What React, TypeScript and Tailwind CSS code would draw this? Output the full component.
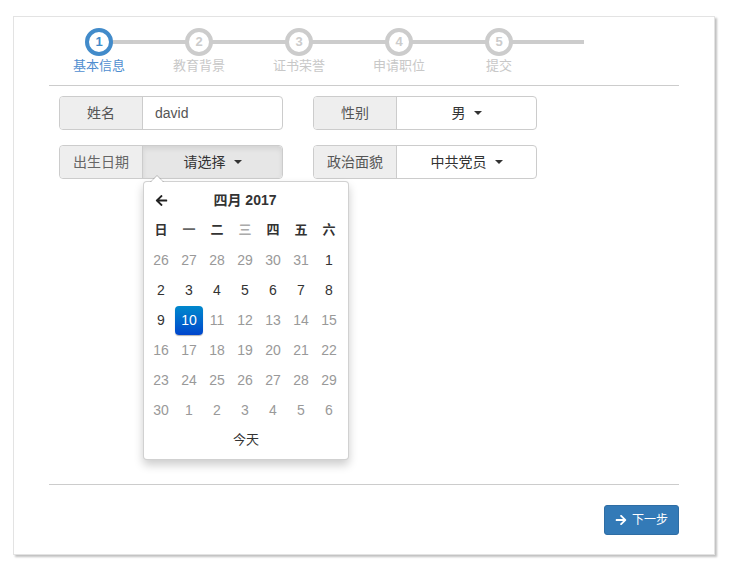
import React from "react";
import { FaArrowLeft, FaArrowRight } from "react-icons/fa";

const font = { fontFamily: '"Liberation Sans", Arial, "Noto Sans CJK SC", sans-serif' };

const steps = ["基本信息", "教育背景", "证书荣誉", "申请职位", "提交"];

function Caret() {
  return <span className="inline-block w-0 h-0 border-t-[4px] border-t-[#333] border-x-[4px] border-x-transparent ml-[8px] align-middle" />;
}

export default function App() {
  const weeks = [
    [26, 27, 28, 29, 30, 31, 1],
    [2, 3, 4, 5, 6, 7, 8],
    [9, 10, 11, 12, 13, 14, 15],
    [16, 17, 18, 19, 20, 21, 22],
    [23, 24, 25, 26, 27, 28, 29],
    [30, 1, 2, 3, 4, 5, 6],
  ];
  const weekdays = ["日", "一", "二", "三", "四", "五", "六"];
  return (
    <div className="w-[731px] h-[569px] bg-white pt-[16px] pl-[13px]" style={font}>
      <div className="relative w-[702px] h-[539px] border border-[#e3e3e3] bg-white shadow-[2px_2px_2px_rgba(0,0,0,0.25)] px-[35px] flex flex-col">
        {/* steps */}
        <div className="relative mt-[11px] flex h-[48px]">
          <div className="absolute left-[50px] top-[12px] w-[485px] h-[4px] bg-[#cccccc]" />
          {steps.map((s, i) => (
            <div key={s} className="relative w-[100px] flex flex-col items-center">
              <div
                className={
                  "w-[28px] h-[28px] rounded-full border-[4px] bg-white flex items-center justify-center text-[13px] font-bold " +
                  (i === 0 ? "border-[#428bca] text-[#428bca]" : "border-[#cccccc] text-[#cccccc]")
                }
              >
                {i + 1}
              </div>
              <div className={"text-[13px] leading-[20px] " + (i === 0 ? "text-[#4f8ed0]" : "text-[#c8c8c8]")}>{s}</div>
            </div>
          ))}
        </div>
        <div className="mt-[9px] border-t border-[#cccccc]" />
        {/* form */}
        <div className="pl-[10px] pt-[10px] flex flex-col gap-[15px] text-[14px] text-[#555]">
          <div className="flex gap-[30px]">
            <div className="flex w-[224px] h-[34px] border border-[#ccc] rounded-[4px] overflow-hidden">
              <div className="w-[83px] bg-[#eeeeee] border-r border-[#ccc] flex items-center justify-center">姓名</div>
              <div className="flex-1 flex items-center pl-[12px] text-[#555]">david</div>
            </div>
            <div className="flex w-[224px] h-[34px] border border-[#ccc] rounded-[4px] overflow-hidden">
              <div className="w-[83px] bg-[#eeeeee] border-r border-[#ccc] flex items-center justify-center">性别</div>
              <div className="flex-1 flex items-center justify-center text-[#333]">男<Caret /></div>
            </div>
          </div>
          <div className="flex gap-[30px]">
            <div className="relative flex w-[224px] h-[34px] border border-[#ccc] rounded-[4px]">
              <div className="w-[83px] bg-[#eeeeee] border-r border-[#ccc] rounded-l-[4px] flex items-center justify-center text-[#666]">出生日期</div>
              <div className="flex-1 flex items-center justify-center bg-[#e6e6e6] rounded-r-[4px] shadow-[inset_0_3px_5px_rgba(0,0,0,0.08)] text-[#333]">请选择<Caret /></div>
              {/* datepicker dropdown */}
              <div className="absolute left-[83px] top-[35px] z-10 w-[206px] h-[279px] bg-white border border-[rgba(0,0,0,0.18)] rounded-[4px] shadow-[0_5px_10px_rgba(0,0,0,0.2)] p-[3px] text-[14px] text-[#333]">
                <div className="absolute left-[6px] top-[-7px] w-0 h-0 border-b-[7px] border-b-[rgba(0,0,0,0.2)] border-x-[7px] border-x-transparent" />
                <div className="absolute left-[7px] top-[-6px] w-0 h-0 border-b-[6px] border-b-white border-x-[6px] border-x-transparent" />
                <div className="grid grid-cols-[28px_140px_28px] h-[30px] items-center">
                  <div className="flex justify-center"><FaArrowLeft className="w-[13px] h-[13px] text-[#222]" /></div>
                  <div className="text-center font-bold text-[14px]">四月 2017</div>
                  <div />
                </div>
                <div className="grid grid-cols-7 w-[196px]">
                  {weekdays.map((w, i) => (
                    <div key={w} className={"h-[30px] flex items-center justify-center font-bold text-[13px] " + (i === 3 ? "text-[#aaa]" : i === 1 ? "text-[#666]" : "text-[#333]")}>{w}</div>
                  ))}
                  {weeks.map((wk, r) =>
                    wk.map((d, c) => {
                      const other = (r === 0 && c < 6) || (r === 5 && c > 0);
                      const disabled = other || d > 10 || r === 5;
                      const sel = r === 2 && c === 1;
                      return (
                        <div key={r + "-" + c} className="h-[30px] flex items-center justify-center">
                          {sel ? (
                            <div className="w-[28px] h-[29px] rounded-[4px] flex items-center justify-center text-white bg-gradient-to-b from-[#0088cc] to-[#0044cc] shadow-[0_1px_1px_rgba(0,0,0,0.3)]">{d}</div>
                          ) : (
                            <span className={disabled ? "text-[#999]" : "text-[#333]"}>{d}</span>
                          )}
                        </div>
                      );
                    })
                  )}
                </div>
                <div className="h-[30px] flex items-center justify-center text-[13px] text-[#333]">今天</div>
              </div>
            </div>
            <div className="flex w-[224px] h-[34px] border border-[#ccc] rounded-[4px] overflow-hidden">
              <div className="w-[83px] bg-[#eeeeee] border-r border-[#ccc] flex items-center justify-center">政治面貌</div>
              <div className="flex-1 flex items-center justify-center text-[#333]">中共党员<Caret /></div>
            </div>
          </div>
        </div>
        <div className="flex-1" />
        <div className="border-t border-[#cccccc]" />
        <div className="h-[69px] flex items-start justify-end pt-[20px]">
          <button className="w-[75px] h-[30px] bg-[#337ab7] border border-[#2e6da4] rounded-[3px] text-white text-[12px] flex items-center justify-center gap-[5px]">
            <FaArrowRight className="w-[12px] h-[12px]" />
            下一步
          </button>
        </div>
      </div>
    </div>
  );
}
